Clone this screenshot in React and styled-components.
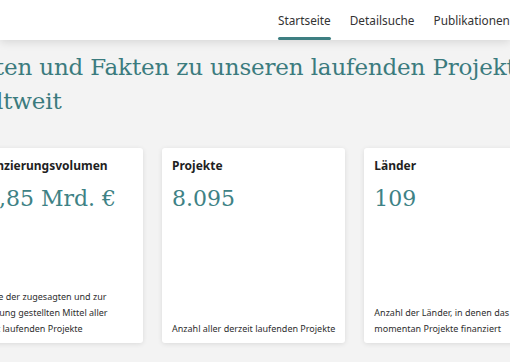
import React from "react";
import styled, { createGlobalStyle } from "styled-components";

const GlobalStyle = createGlobalStyle`
  html, body {
    margin: 0;
    padding: 0;
    background: #f3f3f3;
    overflow: hidden;
  }
`;

const Page = styled.div`
  width: 510px;
  height: 362px;
  overflow: hidden;
  background: #f3f3f3;
  font-family: "Noto Sans", sans-serif;
`;

const Header = styled.header`
  position: relative;
  z-index: 2;
  height: 40px;
  background: #fff;
  box-shadow: 0 2px 9px rgba(0, 0, 0, 0.12);
  display: flex;
  padding-left: 278px;
`;

const Nav = styled.nav`
  display: flex;
  gap: 19px;
  white-space: nowrap;
`;

const NavItem = styled.a`
  position: relative;
  display: flex;
  align-items: center;
  height: 40px;
  font-size: 11.8px;
  color: #333;
  text-decoration: none;

  &::after {
    content: "";
    display: ${(p) => (p.$active ? "block" : "none")};
    position: absolute;
    left: 0;
    right: 0;
    bottom: 0;
    height: 3px;
    border-radius: 2px;
    background: #3e7f82;
  }
`;

const Main = styled.main`
  margin-left: -39px;
  padding-top: 10px;
`;

const Heading = styled.h1`
  margin: 0 0 0 2px;
  font-family: "DejaVu Serif", serif;
  font-weight: normal;
  font-size: 23px;
  line-height: 34px;
  letter-spacing: -0.15px;
  color: #3b7b7e;
  white-space: nowrap;
`;

const CardRow = styled.div`
  display: flex;
  gap: 19px;
  margin-top: 30px;
`;

const Card = styled.section`
  flex: 0 0 182px;
  height: 195px;
  box-sizing: border-box;
  padding: 9px 10px 6px;
  background: #fff;
  border-radius: 3px;
  box-shadow: 0 1px 5px rgba(0, 0, 0, 0.1);
  display: flex;
  flex-direction: column;
  justify-content: space-between;
`;

const CardTitle = styled.h2`
  margin: 0;
  font-size: 12px;
  font-weight: 700;
  line-height: 18px;
  color: #1f1f1f;
  white-space: nowrap;
`;

const Value = styled.div`
  margin-top: 10px;
  font-family: "DejaVu Serif", serif;
  font-size: 22px;
  line-height: 28px;
  color: #3e8285;
  white-space: nowrap;
`;

const Description = styled.p`
  margin: 0;
  font-size: 9px;
  line-height: 16px;
  color: #2e2e2e;
  white-space: nowrap;
`;

const stats = [
  {
    title: "Finanzierungsvolumen",
    value: "24,85 Mrd. €",
    text: ["Summe der zugesagten und zur", "Verfügung gestellten Mittel aller", "derzeit laufenden Projekte"],
  },
  {
    title: "Projekte",
    value: "8.095",
    text: ["Anzahl aller derzeit laufenden Projekte"],
  },
  {
    title: "Länder",
    value: "109",
    text: ["Anzahl der Länder, in denen das BMZ", "momentan Projekte finanziert"],
  },
];

export default function App() {
  return (
    <Page>
      <GlobalStyle />
      <Header>
        <Nav>
          <NavItem $active>Startseite</NavItem>
          <NavItem>Detailsuche</NavItem>
          <NavItem>Publikationen</NavItem>
        </Nav>
      </Header>
      <Main>
        <Heading>
          Daten und Fakten zu unseren laufenden Projekten
          <br />
          weltweit
        </Heading>
        <CardRow>
          {stats.map((s) => (
            <Card key={s.title}>
              <div>
                <CardTitle>{s.title}</CardTitle>
                <Value>{s.value}</Value>
              </div>
              <Description>
                {s.text.map((line, i) => (
                  <React.Fragment key={i}>
                    {line}
                    {i < s.text.length - 1 && <br />}
                  </React.Fragment>
                ))}
              </Description>
            </Card>
          ))}
        </CardRow>
      </Main>
    </Page>
  );
}
